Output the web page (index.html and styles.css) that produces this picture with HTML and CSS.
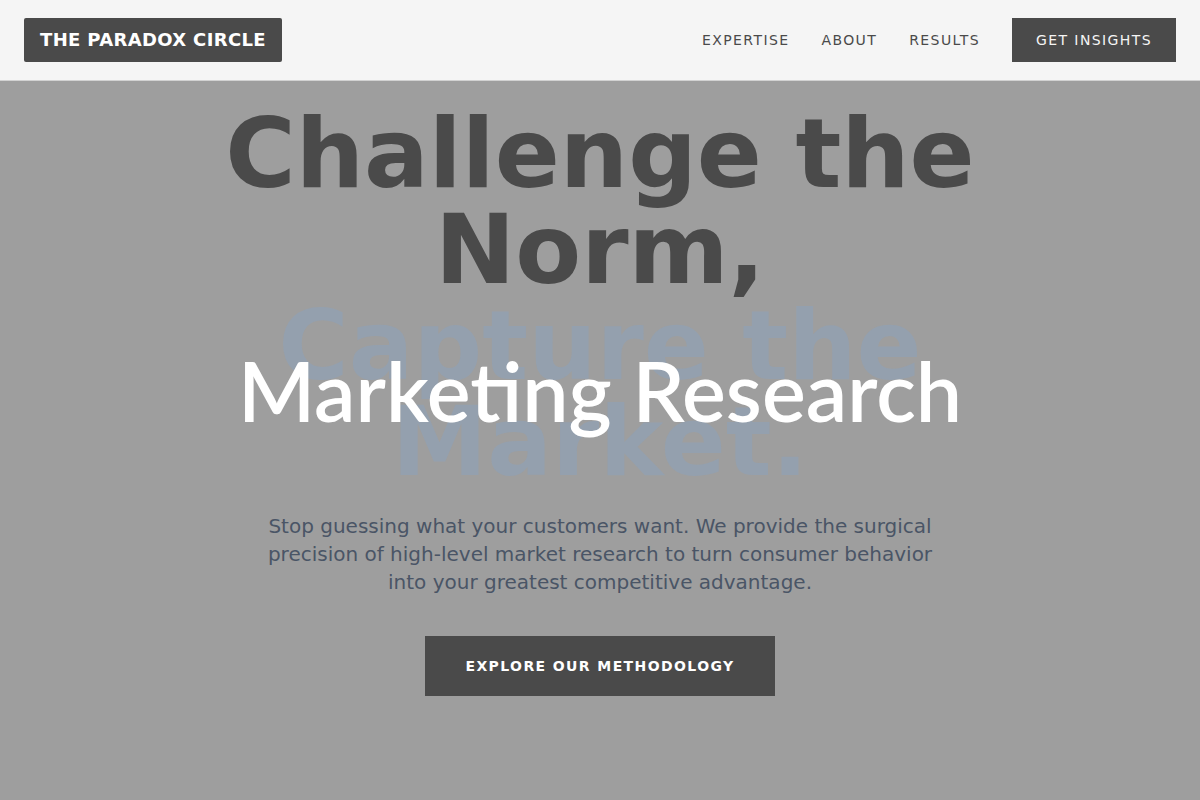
FILE: index.html
```html
<!DOCTYPE html>
<html lang="en">
<head>
<meta charset="utf-8">
<title>The Paradox Circle</title>
<link rel="stylesheet" href="styles.css">
</head>
<body>
<header class="site-header">
  <a class="logo" href="#">THE PARADOX CIRCLE</a>
  <nav class="nav">
    <a class="nav-link" href="#">EXPERTISE</a>
    <a class="nav-link" href="#">ABOUT</a>
    <a class="nav-link" href="#">RESULTS</a>
    <a class="nav-cta" href="#">GET INSIGHTS</a>
  </nav>
</header>
<main class="hero">
  <div class="title-wrap">
    <h1 class="headline">Challenge the Norm,<br><span class="accent">Capture the Market.</span></h1>
    <div class="overlay">Marketing Research</div>
  </div>
  <p class="lead">Stop guessing what your customers want. We provide the surgical precision of high-level market research to turn consumer behavior into your greatest competitive advantage.</p>
  <a class="hero-btn" href="#">EXPLORE OUR METHODOLOGY</a>
</main>
</body>
</html>
```
FILE: styles.css
```css
* { box-sizing: border-box; }
html, body { margin: 0; padding: 0; }
body {
  width: 1200px;
  height: 800px;
  overflow: hidden;
  background: #9e9e9e;
  font-family: "DejaVu Sans", sans-serif;
  color: #4a4a4a;
}
a { text-decoration: none; }

.site-header {
  height: 81px;
  background: #f5f5f5;
  border-bottom: 1px solid #d2d2d2;
  display: flex;
  align-items: center;
  justify-content: space-between;
  padding: 0 24px;
}
.logo {
  display: block;
  background: #4a4a4a;
  color: #ffffff;
  font-weight: bold;
  font-size: 18px;
  letter-spacing: 0.35px;
  height: 44px;
  line-height: 44px;
  padding: 0 16px;
  border-radius: 2px;
}
.nav {
  display: flex;
  align-items: center;
  gap: 32px;
}
.nav-link {
  color: #4a4a4a;
  font-size: 14px;
  letter-spacing: 1.4px;
}
.nav-cta {
  display: block;
  background: #4a4a4a;
  color: #f5f5f5;
  font-size: 14px;
  letter-spacing: 1.4px;
  height: 44px;
  line-height: 44px;
  padding: 0 24px;
}

.hero {
  display: flex;
  flex-direction: column;
  align-items: center;
  text-align: center;
  padding-top: 25px;
}
.title-wrap {
  position: relative;
  width: 800px;
}
.headline {
  margin: 0;
  font-size: 96px;
  line-height: 96px;
  font-weight: bold;
  color: #4a4a4a;
}
.accent {
  color: #94a0ae;
}
.overlay {
  position: absolute;
  left: -100px;
  right: -100px;
  top: 235px;
  font-family: "Lato", sans-serif;
  font-weight: 600;
  font-size: 82.5px;
  line-height: 100px;
  color: #ffffff;
  white-space: nowrap;
}
.lead {
  margin: 22px 0 0;
  max-width: 672px;
  font-size: 20px;
  line-height: 28px;
  color: #4a5566;
}
.hero-btn {
  display: block;
  margin-top: 40px;
  background: #4a4a4a;
  color: #ffffff;
  font-weight: bold;
  font-size: 14px;
  letter-spacing: 1.4px;
  height: 60px;
  line-height: 60px;
  padding: 0 40px;
}
```
